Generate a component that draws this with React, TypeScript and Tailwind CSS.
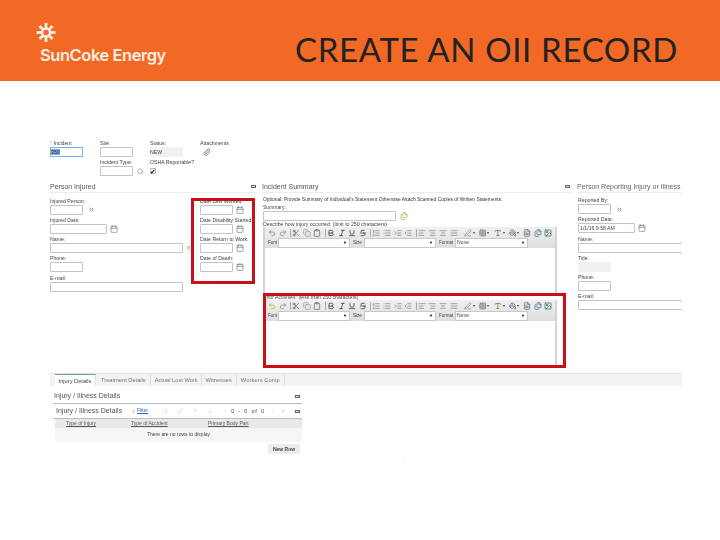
import React from "react";
import {
  Undo2, Redo2, Scissors, Copy, Clipboard, Bold, Italic, Underline, Strikethrough,
  ListOrdered, List, Indent, Outdent, AlignLeft, AlignRight, AlignCenter, AlignJustify,
  PenLine, Table, Type, PaintBucket, FileText, Files, Image, Calendar, Search, Paperclip,
  ChevronsRight, ChevronRight, ChevronLeft, Plus, Pencil, ArrowUp, ArrowDown,
} from "lucide-react";

const Label = ({ children, className = "" }: { children: React.ReactNode; className?: string }) => (
  <div className={`h-[5px] text-[5.2px] leading-[5px] whitespace-nowrap text-[#444] ${className}`}>{children}</div>
);

const Input = ({ w, children, className = "" }: { w: number; children?: React.ReactNode; className?: string }) => (
  <div
    style={{ width: w }}
    className={`h-[10px] shrink-0 border border-[#c4c4c4] bg-white rounded-[1px] text-[5.2px] leading-[8px] px-[1px] text-[#444] overflow-hidden whitespace-nowrap ${className}`}
  >
    {children}
  </div>
);

const CalIcon = () => <Calendar size={8} strokeWidth={1.8} className="text-[#5a6f86] shrink-0" />;

const Field = ({ label, w, icon, val, gap = "gap-[3px]" }: { label: string; w: number; icon?: React.ReactNode; val?: string; gap?: string }) => (
  <div className="flex flex-col gap-[1px] h-[19.3px]">
    <Label>{label}</Label>
    <div className={`flex items-center ${gap}`}>
      <Input w={w}>{val}</Input>
      {icon}
    </div>
  </div>
);

const Collapse = () => <span className="block w-[5px] h-[3px] border border-[#666] bg-[#ddd] shrink-0" />;

const SectionTitle = ({ children, mark = false, className = "" }: { children: React.ReactNode; mark?: boolean; className?: string }) => (
  <div className={`h-[12px] flex items-center justify-between border-b border-[#e8edf0] text-[7px] leading-[10px] text-[#555] whitespace-nowrap ${className}`}>
    <span>{children}</span>
    {mark && <Collapse />}
  </div>
);

const Tool = ({ I, c = "text-[#666]", caret = false }: { I: React.ComponentType<any>; c?: string; caret?: boolean }) => (
  <span className="flex items-center w-[10.6px] shrink-0">
    <I size={8} strokeWidth={2.2} className={c} />
    {caret && <span className="ml-[1px] text-[4px] leading-none text-[#444]">▾</span>}
  </span>
);

const Sep = () => <span className="w-[1px] h-[8px] bg-[#aaa] mx-[1px] shrink-0" />;

const Sel = ({ w, val }: { w: number; val?: string }) => (
  <div style={{ width: w }} className="h-[10px] bg-white border border-[#c8c8c8] flex items-center justify-between px-[1px] text-[5px] text-[#444]">
    <span>{val}</span>
    <span className="text-[4px] leading-none text-black mr-[1px]">▼</span>
  </div>
);

const Toolbar = ({ first = "text-[#888]" }: { first?: string }) => (
  <div className="h-[21px] bg-gradient-to-b from-[#f0f0f0] to-[#dedede] flex flex-col pl-[3px] pt-[1px]">
    <div className="h-[10px] flex items-center">
      <Tool I={Undo2} c={first} />
      <Tool I={Redo2} c="text-[#888]" />
      <Sep />
      <Tool I={Scissors} />
      <Tool I={Copy} c="text-[#999]" />
      <Tool I={Clipboard} />
      <Sep />
      <Tool I={Bold} c="text-[#333]" />
      <Tool I={Italic} c="text-[#333]" />
      <Tool I={Underline} c="text-[#334]" />
      <Tool I={Strikethrough} c="text-[#333]" />
      <Sep />
      <Tool I={ListOrdered} c="text-[#888]" />
      <Tool I={List} c="text-[#888]" />
      <Tool I={Indent} c="text-[#888]" />
      <Tool I={Outdent} c="text-[#888]" />
      <Sep />
      <Tool I={AlignLeft} c="text-[#888]" />
      <Tool I={AlignRight} c="text-[#888]" />
      <Tool I={AlignCenter} c="text-[#888]" />
      <Tool I={AlignJustify} c="text-[#888]" />
      <span className="w-[6px]" />
      <Tool I={PenLine} c="text-[#888]" caret />
      <span className="w-[6px]" />
      <Tool I={Table} caret />
      <span className="w-[7px]" />
      <Tool I={Type} c="text-[#7a6a3a]" caret />
      <span className="w-[6px]" />
      <Tool I={PaintBucket} c="text-[#44586e]" caret />
      <span className="w-[6px]" />
      <Tool I={FileText} />
      <Tool I={Files} c="text-[#4a6a8a]" />
      <Tool I={Image} c="text-[#3a6a5a]" />
    </div>
    <div className="h-[10px] flex items-center text-[4.5px] text-[#444]">
      <span className="w-[10px]">Font</span>
      <Sel w={72} />
      <span className="ml-[3px] w-[11px]">Size</span>
      <Sel w={72} />
      <span className="ml-[3px] w-[16px]">Format</span>
      <Sel w={73} val="None" />
    </div>
  </div>
);

export default function App() {
  return (
    <div className="relative w-[720px] h-[540px] bg-white overflow-hidden font-['Liberation_Sans',sans-serif]">
      <header className="h-[81px] bg-[#f16925] flex items-start text-white">
        <div className="ml-[36px] mt-[23px] w-[240px]">
          <svg width="20" height="19" viewBox="0 0 20 19" className="block">
            <g stroke="#fdeee4" strokeWidth="2.8">
              <line x1="10" y1="0" x2="10" y2="5" />
              <line x1="10" y1="14" x2="10" y2="19" />
              <line x1="0.5" y1="9.5" x2="5.5" y2="9.5" />
              <line x1="14.5" y1="9.5" x2="19.5" y2="9.5" />
              <line x1="3.5" y1="3" x2="6.5" y2="6" />
              <line x1="13.5" y1="13" x2="16.5" y2="16" />
              <line x1="16.5" y1="3" x2="13.5" y2="6" />
              <line x1="6.5" y1="13" x2="3.5" y2="16" />
            </g>
            <circle cx="10" cy="9.5" r="4" fill="none" stroke="#fdeee4" strokeWidth="2.4" />
          </svg>
          <div className="ml-[4px] mt-[3px] text-[16.5px] leading-[20px] font-semibold tracking-[-0.45px] font-['Inter',sans-serif] whitespace-nowrap text-[#fdeee4]">
            SunCoke Energy
          </div>
        </div>
        <h1 className="ml-[19px] mt-[28px] text-[33px] leading-[42px] font-normal text-[#222] font-['Lato',sans-serif] whitespace-nowrap tracking-[0.65px]">
          CREATE AN OII RECORD
        </h1>
      </header>

      <main className="pl-[50px] pt-[60px] blur-[0.3px]">
        <div className="flex h-[40px]">
          <div className="w-[50px]">
            <Label><span className="text-[#e8b04a]">*</span> Incident</Label>
            <div className="mt-[1px] w-[33px] h-[10px] border border-[#7fb0e0] text-[5.2px] leading-[8px] text-[#333]"><span className="bg-[#7aa7e0]">350</span></div>
          </div>
          <div className="w-[50px] flex flex-col gap-[3px]">
            <div>
              <Label>Site:</Label>
              <Input w={33} className="mt-[1px]" />
            </div>
            <div>
              <Label>Incident Type:</Label>
              <div className="flex items-center gap-[4px] mt-[1px]">
                <Input w={33} />
                <Search size={7} className="text-[#888]" />
              </div>
            </div>
          </div>
          <div className="w-[50px] flex flex-col gap-[3px]">
            <div>
              <Label>Status:</Label>
              <div className="mt-[1px] w-[33px] h-[10px] bg-[#f1f1f1] text-[5.2px] leading-[10px] text-[#444]">NEW</div>
            </div>
            <div>
              <Label>OSHA Reportable?</Label>
              <div className="mt-[3px] w-[6px] h-[6px] border border-[#bbb] flex items-center justify-center text-[7px] font-bold leading-none text-black">✓</div>
            </div>
          </div>
          <div className="w-[50px]">
            <Label>Attachments</Label>
            <Paperclip size={8} strokeWidth={2} className="mt-[2px] ml-[3px] text-[#667]" />
          </div>
        </div>

        <div className="flex h-[192px]">
          {/* Person Injured */}
          <section className="w-[206px] shrink-0">
            <SectionTitle mark>Person Injured</SectionTitle>
            <div className="flex pt-[5.5px]">
              <div className="w-[150px] shrink-0">
                <Field label="Injured Person:" w={33} gap="gap-[5px]" icon={<ChevronsRight size={7} className="text-[#445]" />} />
                <Field label="Injured Date:" w={57} icon={<CalIcon />} />
                <Field label="Name:" w={133} gap="gap-[4px]" icon={<span className="text-[5px] text-[#c55] leading-none">X</span>} />
                <Field label="Phone:" w={33} />
                <Field label="E-mail:" w={133} />
              </div>
              <div className="w-[56px]">
                <Field label="Date Last Worked:" w={33} icon={<CalIcon />} />
                <Field label="Date Disability Started:" w={33} icon={<CalIcon />} />
                <Field label="Date Return to Work:" w={33} icon={<CalIcon />} />
                <Field label="Date of Death:" w={33} icon={<CalIcon />} />
              </div>
            </div>
          </section>

          {/* Incident Summary */}
          <section className="w-[311px] shrink-0 ml-[6px]">
            <SectionTitle mark className="pr-[3px]">Incident Summary</SectionTitle>
            <div className="pl-[1px] pt-[3px]">
              <div className="h-[8px] text-[4.9px] leading-[7px] text-[#333] whitespace-nowrap">
                Optional: Provide Summary of Individual's Statement Otherwise Attach Scanned Copies of Written Statements.
              </div>
              <Label className="mt-[0.5px] text-[5px]">Summary:</Label>
              <div className="flex items-center gap-[4px] mt-[1.5px]">
                <Input w={133} />
                <Files size={8} className="text-[#b89a4a]" />
              </div>
              <Label className="mt-[0.5px] text-[4.8px]">Describe how injury occurred:  (limit to 250 characters)</Label>
              <div className="w-[294px] h-[68px] border-x-2 border-[#d4d4d4] mt-[0.5px]">
                <Toolbar />
              </div>
              <Label className="text-[4.8px]">Prior Activities: (less than 250 characters)</Label>
              <div className="w-[294px] h-[66px] border-x-2 border-[#d4d4d4]">
                <Toolbar first="text-[#e0a93a]" />
              </div>
            </div>
          </section>

          {/* Person Reporting */}
          <section className="w-[105px] shrink-0 ml-[4px] overflow-hidden">
            <SectionTitle className="text-[#666]">Person Reporting Injury or Illness</SectionTitle>
            <div className="pl-[1px] pt-[5px]">
              <Field label="Reported By:" w={33} gap="gap-[5px]" icon={<ChevronsRight size={7} className="text-[#445]" />} />
              <Field label="Reported Date:" w={57} val="1/1/16 9:58 AM" icon={<CalIcon />} />
              <Field label="Name:" w={110} />
              <div className="flex flex-col gap-[1px] h-[19.3px]">
                <Label>Title:</Label>
                <div className="w-[33px] h-[10px] bg-[#f1f1f1]" />
              </div>
              <Field label="Phone:" w={33} />
              <Field label="E-mail:" w={110} />
            </div>
          </section>
        </div>

        {/* Tabs */}
        <div className="w-[632px] h-[13px] bg-[#f3f3f3] border-t border-[#e6e6e6] flex pl-[5px] text-[5.7px] text-[#777]">
          <div className="w-[41px] bg-white border-t border-[#5f9ea8] text-center leading-[12px] text-[#444] border-r border-r-[#ddd]">Injury Details</div>
          <div className="pl-[5px] pr-[4px] leading-[12px] border-r border-[#ddd]">Treatment Details</div>
          <div className="pl-[4px] pr-[3px] leading-[12px] border-r border-[#ddd]">Actual Lost Work</div>
          <div className="px-[4px] leading-[12px] border-r border-[#ddd]">Witnesses</div>
          <div className="px-[4px] leading-[12px] border-r border-[#ddd] tracking-[0.1px]">Workers Comp</div>
        </div>

        <div className="ml-[3px] w-[249px]">
          <div className="mt-[4px] h-[14px] flex items-center justify-between pr-[2px] pl-[1px] border-b border-[#a9c4ca] text-[7px] text-[#555]">
            <span>Injury / Illness Details</span>
            <Collapse />
          </div>
          <div className="h-[15px] pl-[3px] pr-[2px] flex items-center text-[7px] text-[#555] border-b border-[#a9c4ca]">
            <span className="w-[75px] whitespace-nowrap">Injury / Illness Details</span>
            <ChevronRight size={5} className="text-[#336]" />
            <span className="ml-[1px] text-[5px] text-[#36c] underline">Filter</span>
            <span className="ml-[14px] flex items-center gap-[9px] text-[#ccc]">
              <Search size={6} />
              <Pencil size={6} />
              <ArrowUp size={6} />
              <ArrowDown size={6} />
              <ChevronLeft size={6} />
            </span>
            <span className="ml-[3px] text-[5.5px] tracking-[0.8px] text-[#444] whitespace-nowrap [word-spacing:1px]">0 - 0 of 0</span>
            <span className="ml-[5px] flex items-center gap-[4px] text-[#ccc]">
              <ChevronRight size={6} />
              <Plus size={6} />
            </span>
            <span className="ml-auto"><Collapse /></span>
          </div>
          <div className="ml-[2px] h-[9px] bg-[#e9e9e9] flex items-center text-[5px] text-[#555] underline">
            <span className="w-[65px] pl-[11px]">Type of Injury</span>
            <span className="w-[79px] pl-[11px]">Type of Accident</span>
            <span className="pl-[9px]">Primary Body Part</span>
          </div>
          <div className="ml-[2px] h-[14px] bg-[#f6f6f6] flex items-center justify-center text-[5px] text-[#444]">There are no rows to display</div>
          <div className="flex justify-end mt-[2px] pr-[2px]">
            <div className="w-[32px] h-[10px] bg-[#ececec] text-center text-[5px] leading-[10px] font-bold text-[#444]">New Row</div>
          </div>
        </div>
      </main>

      {/* Highlight boxes over the captured form */}
      <div className="absolute left-[191px] top-[198px] w-[64px] h-[86px] border-[3px] border-[#c8101a]" />
      <div className="absolute left-[263px] top-[293px] w-[303px] h-[75px] border-[3px] border-[#c8101a]" />
      <span className="absolute left-[404px] top-[457px] text-[5px] text-[#666]">.</span>
    </div>
  );
}
